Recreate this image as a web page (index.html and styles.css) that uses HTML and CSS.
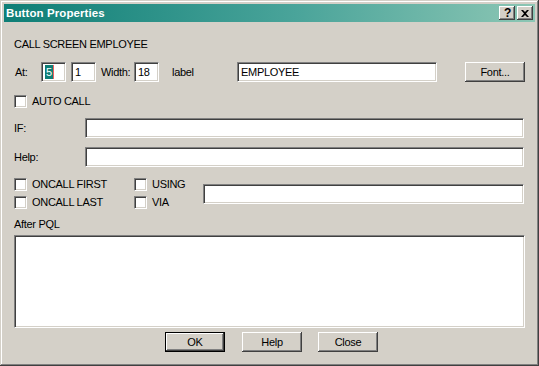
FILE: index.html
```html
<!DOCTYPE html>
<html lang="en">
<head>
  <meta charset="UTF-8" />
  <title>Button Properties</title>
  <link rel="stylesheet" href="styles.css">
</head>
<body>

  <div class="window">
    <div class="titlebar">
      <span class="title">Button Properties</span>
      <div class="caption-buttons">
        <div class="cap-btn cap-help">?</div>
        <div class="cap-btn cap-close">
          <svg width="8" height="7" viewBox="0 0 8 7">
            <path d="M0 0 L2 0 L4 2 L6 0 L8 0 L5 3.5 L8 7 L6 7 L4 5 L2 7 L0 7 L3 3.5 Z" fill="#000"/>
          </svg>
        </div>
      </div>
    </div>

    <div class="content">
      <div class="heading">CALL SCREEN EMPLOYEE</div>

      <!-- position row -->
      <div class="row row-at">
        <span class="lbl lbl-at">At:</span>
        <div class="field field-small"><span class="sel">5</span><span class="caret"></span></div>
        <div class="field field-small">1</div>
        <span class="lbl lbl-width">Width:</span>
        <div class="field field-small">18</div>
        <span class="lbl lbl-label">label</span>
        <div class="field field-label">EMPLOYEE</div>
        <div class="btn btn-font">Font...</div>
      </div>

      <div class="row row-auto">
        <span class="check"></span><span class="check-text">AUTO CALL</span>
      </div>

      <div class="row row-if">
        <span class="lbl lbl-long">IF:</span>
        <div class="field field-wide"></div>
      </div>

      <div class="row row-help">
        <span class="lbl lbl-long">Help:</span>
        <div class="field field-wide"></div>
      </div>

      <!-- oncall options -->
      <div class="row options">
        <div class="opt-col">
          <div class="opt"><span class="check"></span><span class="check-text">ONCALL FIRST</span></div>
          <div class="opt"><span class="check"></span><span class="check-text">ONCALL LAST</span></div>
        </div>
        <div class="opt-col opt-col2">
          <div class="opt"><span class="check"></span><span class="check-text">USING</span></div>
          <div class="opt"><span class="check"></span><span class="check-text">VIA</span></div>
        </div>
        <div class="field field-using"></div>
      </div>

      <div class="after-label">After PQL</div>
      <div class="field textarea"></div>

      <div class="buttons">
        <div class="btn btn-default">OK</div>
        <div class="btn btn-help">Help</div>
        <div class="btn btn-close">Close</div>
      </div>
    </div>
  </div>

</body>
</html>
```

FILE: styles.css
```css
body {
  margin: 0;
  font-family: "Liberation Sans", Arial, sans-serif;
  font-size: 11px;
  letter-spacing: -0.3px;
  color: #000;
  background: #d4d0c8;
}

.window {
  width: 539px;
  height: 366px;
  box-sizing: border-box;
  padding: 4px;
  background: #d4d0c8;
  box-shadow: inset -1px -1px #404040, inset 1px 1px #d4d0c8,
              inset -2px -2px #808080, inset 2px 2px #fff;
}

.titlebar {
  height: 18px;
  display: flex;
  align-items: center;
  justify-content: space-between;
  padding: 0 2px 0 2px;
  background: linear-gradient(to right, #0e7e76, #4aa49a 55%, #8cc6b4);
}

.title {
  color: #fff;
  font-weight: bold;
  font-size: 11.5px;
  letter-spacing: 0.1px;
}

.caption-buttons {
  display: flex;
  gap: 2px;
}

.cap-btn {
  width: 16px;
  height: 14px;
  box-sizing: border-box;
  background: #d4d0c8;
  display: flex;
  align-items: center;
  justify-content: center;
  box-shadow: inset -1px -1px #404040, inset 1px 1px #fff,
              inset -2px -2px #808080;
}

.cap-help {
  font-weight: bold;
  font-size: 12px;
  line-height: 14px;
  padding-left: 1px;
}

.content {
  padding: 0 10px;
}

.heading {
  margin-top: 16px;
  line-height: 13px;
}

.row {
  display: flex;
  align-items: center;
}

.row-at {
  margin-top: 11px;
  height: 20px;
}

.lbl-at { width: 27px; padding-left: 1px; box-sizing: border-box; }
.lbl-width { margin-left: 5px; width: 33px; }
.lbl-label { margin-left: 13px; width: 65px; }
.lbl-long { width: 71px; }

.field {
  height: 20px;
  box-sizing: border-box;
  background: #fff;
  border: 1px solid;
  border-color: #808080 #fff #fff #808080;
  box-shadow: inset 1px 1px #404040, inset -1px -1px #d4d0c8;
  padding: 0 3px;
  display: flex;
  align-items: center;
  line-height: 13px;
}

.field-small { width: 25px; }
.field-small + .field-small { margin-left: 5px; }
.field-label { width: 200px; }
.field-wide { flex: 1; margin-right: 1px; }
.field-using { flex: 1; margin-left: 7px; margin-right: 1px; }

.sel {
  background: #0e7e76;
  color: #fff;
  padding: 0 1px;
  line-height: 14px;
}

.caret {
  width: 1px;
  height: 14px;
  background: #f06060;
}

.btn {
  width: 60px;
  height: 20px;
  box-sizing: border-box;
  display: flex;
  align-items: center;
  justify-content: center;
  background: #d4d0c8;
  box-shadow: inset -1px -1px #404040, inset 1px 1px #fff,
              inset -2px -2px #808080;
}

.btn-font { margin-left: auto; margin-right: 0; }

.row-auto { margin-top: 13px; height: 13px; }
.row-if { margin-top: 10px; }
.row-help { margin-top: 9px; }

.check {
  width: 13px;
  height: 13px;
  box-sizing: border-box;
  background: #fff;
  border: 1px solid;
  border-color: #808080 #fff #fff #808080;
  box-shadow: inset 1px 1px #404040, inset -1px -1px #d4d0c8;
  flex: none;
}

.check-text {
  margin-left: 5px;
  line-height: 13px;
}

.options {
  margin-top: 11px;
  height: 31px;
}

.opt-col {
  width: 120px;
  display: flex;
  flex-direction: column;
  gap: 5px;
}

.opt-col2 { width: 62px; }

.opt {
  display: flex;
  align-items: center;
  height: 13px;
}

.after-label {
  margin-top: 9px;
  line-height: 13px;
}

.textarea {
  margin-top: 4px;
  height: 93px;
}

.buttons {
  display: flex;
  margin-top: 4px;
  padding-left: 151px;
}

.btn-default {
  box-shadow: inset 0 0 0 1px #000, inset -2px -2px #404040,
              inset 2px 2px #fff, inset -3px -3px #808080;
}

.btn-help { margin-left: 17px; }
.btn-close { margin-left: 16px; }
```
